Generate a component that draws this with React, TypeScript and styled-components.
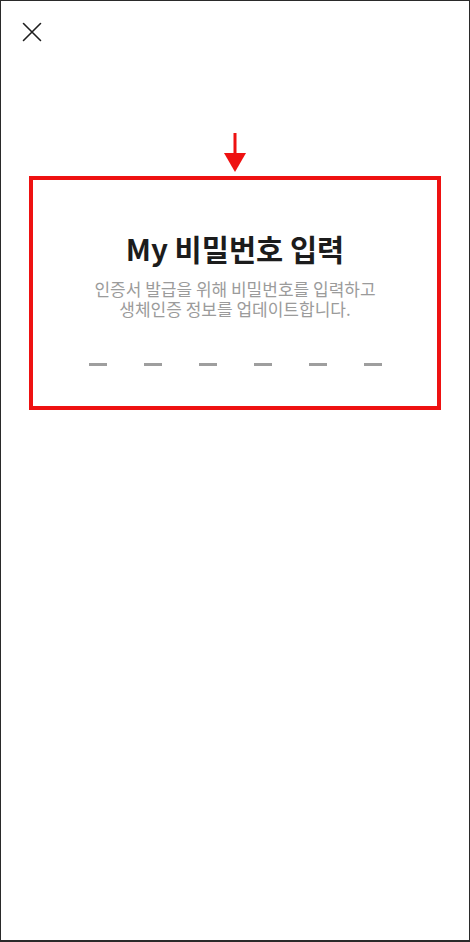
import React from 'react';
import styled, {createGlobalStyle} from 'styled-components';

const GlobalStyle = createGlobalStyle`
  * {
    box-sizing: border-box;
  }

  body {
    margin: 0;
    background: #ffffff;
    font-family: "Noto Sans CJK KR", "Noto Sans", sans-serif;
  }
`

const DIGITS = 6;

const CloseIcon = () => (
    <svg width="20" height="20" viewBox="0 0 20 20" fill="none">
        <path d="M1.5 1.5L18.5 18.5M18.5 1.5L1.5 18.5" stroke="#1e1e1e" strokeWidth="1.6" strokeLinecap="round"/>
    </svg>
);

const DownArrow = () => (
    <svg width="22" height="39" viewBox="0 0 22 39">
        <rect x="9.5" y="0" width="3" height="21" fill="#ee1111"/>
        <polygon points="0,20 22,20 11,39" fill="#ee1111"/>
    </svg>
);

export default function App() {
    return (
        <>
            <GlobalStyle/>
            <Page>
                <Header>
                    <CloseButton aria-label="닫기">
                        <CloseIcon/>
                    </CloseButton>
                </Header>
                <Pointer>
                    <DownArrow/>
                </Pointer>
                <Highlight>
                    <Title>My 비밀번호 입력</Title>
                    <Description>
                        인증서 발급을 위해 비밀번호를 입력하고<br/>
                        생체인증 정보를 업데이트합니다.
                    </Description>
                    <PinRow>
                        {Array.from({length: DIGITS}).map((_, index) => (
                            <PinSlot key={index}/>
                        ))}
                    </PinRow>
                </Highlight>
            </Page>
        </>
    );
}

const Page = styled.div`
  width: 470px;
  min-height: 942px;
  border-style: solid;
  border-color: #2a2a2a;
  border-width: 1px 1px 2px;
  background: #ffffff;
  display: flex;
  flex-direction: column;
`

const Header = styled.header`
  height: 62px;
  display: flex;
  align-items: center;
  padding-left: 21px;
`

const CloseButton = styled.button`
  width: 20px;
  height: 20px;
  padding: 0;
  border: none;
  background: none;
  display: flex;
  cursor: pointer;
`

const Pointer = styled.div`
  display: flex;
  justify-content: center;
  margin-top: 70px;
  margin-bottom: 4px;
  padding-right: 1px;

  svg {
    display: block;
  }
`

const Highlight = styled.section`
  width: 412px;
  margin: 0 auto;
  border: 4px solid #ee1111;
  padding: 50px 0 40px;
  display: flex;
  flex-direction: column;
  align-items: center;
`

const Title = styled.h1`
  margin: 0;
  font-size: 29.5px;
  line-height: 36px;
  font-weight: 700;
  color: #1c1c1c;
`

const Description = styled.p`
  margin: 13px 0 0;
  font-size: 17px;
  line-height: 20px;
  font-weight: 400;
  color: #9b9b9b;
  text-align: center;
`

const PinRow = styled.div`
  display: flex;
  gap: 37px;
  margin-top: 44px;
`

const PinSlot = styled.span`
  display: block;
  width: 18px;
  height: 3px;
  background: #9e9e9e;
`
